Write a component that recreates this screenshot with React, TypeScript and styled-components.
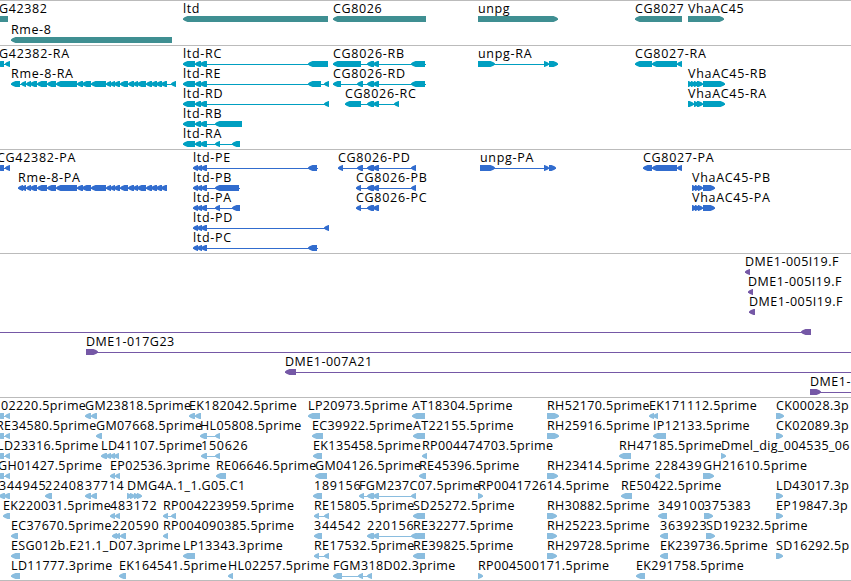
import styled, { createGlobalStyle } from 'styled-components'

type Span = [number, number]

interface Feature {
  label: string
  x: number
  exons: Span[]
  forward?: boolean
  line?: Span
}

interface TrackData {
  name: string
  color: string
  rowHeight: number
  gap: number
  spacing: number
  rows: Feature[][]
}

const VIEW_WIDTH = 851
const BAR_HEIGHT = 6
const TIP = 4.5

const GlobalStyle = createGlobalStyle`
  body {
    margin: 0;
    background: #fff;
  }
`
const Browser = styled.main`
  width: ${VIEW_WIDTH}px;
  height: 581px;
  overflow: hidden;
  border-bottom: 1px solid #bbb;
  box-sizing: border-box;
  background: #fff;
  color: #000;
  font: 12.5px/14px 'Open Sans', sans-serif;
  font-kerning: none;
`
const TrackSection = styled.section<{ $gap: number }>`
  border-top: 1px solid #bbb;
  padding-bottom: ${({ $gap }) => $gap}px;
`
const Row = styled.div<{ $height: number }>`
  position: relative;
  height: ${({ $height }) => $height}px;
`
const Label = styled.span<{ $spacing: number }>`
  position: absolute;
  top: 1px;
  white-space: pre;
  letter-spacing: ${({ $spacing }) => $spacing}px;
`
const Glyphs = styled.svg`
  position: absolute;
  top: 15px;
  left: 0;
  display: block;
`

// reverse strand unless stated otherwise
function rev(label: string, x: number, exons: Span[], line?: Span): Feature {
  return { label, x, exons, line }
}
function fwd(label: string, x: number, exons: Span[], line?: Span): Feature {
  return { label, x, exons, line, forward: true }
}

const ltd: Span[] = [[183, 195], [195, 201], [200, 207]]
const ltdCds: Span[] = [[193, 198], [197, 202], [201, 207]]
const cg8026: Span[] = [[367, 374], [373, 379]]
const edge: Span[] = [[-4, 4], [5, 10]]
const rme: Span[] = [
  [26, 31], [30, 37], [37, 47], [47, 56], [56, 77], [77, 83], [82, 91], [91, 106],
  [106, 111], [110, 115], [114, 120], [120, 128], [128, 134], [133, 138], [137, 146], [146, 152],
  [151, 157], [156, 162], [161, 167],
]

const tracks: TrackData[] = [
  {
    name: 'genes', color: '#3f8f92', rowHeight: 21, gap: 2, spacing: 0.6,
    rows: [
      [
        rev('G42382', -1, [[-10, 8]]),
        rev('ltd', 183, [[183, 328]]),
        rev('CG8026', 333, [[333, 426]]),
        fwd('unpg', 478, [[478, 558]]),
        rev('CG8027', 635, [[635, 682]]),
        fwd('VhaAC45', 688, [[688, 724]]),
      ],
      [rev('Rme-8', 11, [[11, 172]])],
    ],
  },
  {
    name: 'transcripts', color: '#009fc1', rowHeight: 20, gap: 3, spacing: 0.7,
    rows: [
      [
        rev('G42382-RA', -1, edge),
        rev('ltd-RC', 183, [...ltd, [308, 328]]),
        rev('CG8026-RB', 333, [[333, 361], ...cg8026, [411, 425]], [333, 426]),
        fwd('unpg-RA', 478, [[478, 495], [544, 549], [549, 558]]),
        rev('CG8027-RA', 635, [[635, 652], [652, 677], [677, 682]]),
      ],
      [
        rev('Rme-8-RA', 11, [[11, 20], [21, 26], ...rme, [171, 176]]),
        rev('ltd-RE', 183, [...ltd, [308, 321], [324, 329]]),
        rev('CG8026-RD', 333, [[333, 341], [357, 363], ...cg8026, [411, 425]], [333, 426]),
        fwd('VhaAC45-RB', 688, [[688, 693], [691, 696], [694, 699], [697, 703], [703, 725]]),
      ],
      [
        rev('ltd-RD', 183, [...ltd, [324, 329]]),
        rev('CG8026-RC', 345, [[345, 361], ...cg8026, [394, 399]]),
        fwd('VhaAC45-RA', 688, [[688, 694], [694, 699], [697, 703], [703, 725]]),
      ],
      [rev('ltd-RB', 183, [...ltd, [215, 242]])],
      [rev('ltd-RA', 183, [...ltd, [215, 220], [232, 240]])],
    ],
  },
  {
    name: 'polypeptides', color: '#316cce', rowHeight: 20, gap: 3, spacing: 0.7,
    rows: [
      [
        rev('CG42382-PA', -3, edge),
        rev('ltd-PE', 193, [...ltdCds, [308, 317]], [193, 318]),
        rev('CG8026-PD', 338, [[338, 343], [357, 363], ...cg8026, [411, 416]]),
        fwd('unpg-PA', 480, [[480, 495], [544, 549], [549, 556]]),
        rev('CG8027-PA', 643, [[643, 652], [652, 677], [677, 682]]),
      ],
      [
        rev('Rme-8-PA', 18, [[18, 23], [21, 26], ...rme]),
        rev('ltd-PB', 193, [...ltdCds, [215, 239]], [193, 240]),
        rev('CG8026-PB', 356, [[356, 361], ...cg8026, [411, 416]]),
        fwd('VhaAC45-PB', 692, [[692, 697], [695, 700], [698, 703], [703, 715]]),
      ],
      [
        rev('ltd-PA', 193, [...ltdCds, [215, 220], [232, 240]]),
        rev('CG8026-PC', 356, [[356, 361], ...cg8026]),
        fwd('VhaAC45-PA', 692, [[692, 697], [695, 700], [698, 703], [703, 715]]),
      ],
      [rev('ltd-PD', 193, [...ltdCds, [324, 329]])],
      [rev('ltd-PC', 193, [...ltdCds, [308, 317]], [193, 318])],
    ],
  },
  {
    name: 'clones', color: '#7558a6', rowHeight: 20, gap: 3, spacing: 0.5,
    rows: [
      [rev('DME1-005I19.F', 745, [[745, 750]])],
      [rev('DME1-005I19.F', 748, [[748, 753]])],
      [rev('DME1-005I19.F', 749, [[749, 755]])],
      [rev('', 0, [[801, 811]], [0, 811])],
      [fwd('DME1-017G23', 86, [[86, 98]], [86, 851])],
      [rev('DME1-007A21', 285, [[285, 296]], [285, 851])],
      [fwd('DME1-', 810, [[810, 821]], [810, 851])],
    ],
  },
  {
    name: 'ests', color: '#8abddf', rowHeight: 20, gap: 2, spacing: 0.38,
    rows: [
      [
        rev('02220.5prime', 1, edge),
        rev('GM23818.5prime', 85, [[85, 91], [91, 97]]),
        rev('EK182042.5prime', 189, [[189, 195], [195, 201]]),
        rev('LP20973.5prime', 308, [[308, 320]]),
        rev('AT18304.5prime', 412, [[412, 425]]),
        fwd('RH52170.5prime', 547, [[547, 559]]),
        rev('EK171112.5prime', 649, [[649, 654], [653, 658]]),
        fwd('CK00028.3p', 776, [[776, 784]]),
      ],
      [
        rev('RE34580.5prime', -4, edge),
        rev('GM07668.5prime', 96, [[96, 102]]),
        rev('HL05808.5prime', 200, [[200, 207], [215, 220]]),
        rev('EC39922.5prime', 312, [[312, 323]]),
        rev('AT22155.5prime', 413, [[413, 425]]),
        fwd('RH25916.5prime', 547, [[547, 559]]),
        rev('IP12133.5prime', 653, [[653, 666]]),
        fwd('CK02089.3p', 776, [[776, 783]]),
      ],
      [
        rev('LD23316.5prime', -3, edge),
        rev('LD41107.5prime', 101, [[101, 107], [106, 111], [110, 115], [114, 119]]),
        rev('150626', 201, [[201, 207], [215, 220]]),
        rev('EK135458.5prime', 313, [[313, 322]]),
        rev('RP004474703.5prime', 422, [[422, 427]]),
        rev('RH47185.5prime', 619, [[619, 631]]),
        fwd('Dmel_dig_004535_06', 721, [[721, 726]]),
      ],
      [
        rev('GH01427.5prime', -2, edge),
        rev('EP02536.3prime', 110, [[110, 115], [115, 120]]),
        rev('RE06646.5prime', 216, [[216, 226]]),
        rev('GM04126.5prime', 315, [[315, 327]]),
        rev('RE45396.5prime', 419, [[419, 426]]),
        fwd('RH23414.5prime', 547, [[547, 558]]),
        rev('228439', 655, [[655, 660]]),
        fwd('GH21610.5prime', 703, [[703, 714]]),
      ],
      [
        rev('344945', -1, [[-1, 5], [4, 10]]),
        rev('22408', 45, [[45, 52]]),
        rev('37714', 85, [[85, 91], [91, 97]]),
        fwd('DMG4A.1_1.G05.C1', 127, [[127, 132], [130, 135], [134, 139], [137, 142]]),
        rev('189156', 314, [[313, 322]]),
        rev('FGM237C07.5prime', 359, [[359, 364], ...cg8026, [411, 416]]),
        fwd('RP004172614.5prime', 478, [[478, 483]]),
        rev('RE50422.5prime', 621, [[621, 632]]),
        fwd('LD43017.3p', 776, [[776, 783]]),
      ],
      [
        rev('EK220031.5prime', 3, [[3, 10]]),
        rev('483172', 110, [[110, 115], [115, 120]]),
        rev('RP004223959.5prime', 163, [[163, 168], [171, 176]]),
        rev('RE15805.5prime', 314, [[314, 319], [324, 329]]),
        rev('SD25272.5prime', 413, [[413, 425]]),
        fwd('RH30882.5prime', 547, [[547, 557]]),
        rev('349100', 658, [[658, 667]]),
        fwd('375383', 704, [[704, 713]]),
        fwd('EP19847.3p', 776, [[776, 783]]),
      ],
      [
        rev('EC37670.5prime', 11, [[11, 18]]),
        rev('220590', 112, [[112, 117], [115, 120], [120, 126]]),
        rev('RP004090385.5prime', 163, [[163, 168]]),
        rev('344542', 314, [[314, 322]]),
        rev('220156', 367, [...cg8026, [411, 417]]),
        rev('RE32277.5prime', 413, [[413, 425]]),
        fwd('RH25223.5prime', 547, [[547, 557]]),
        rev('363923', 660, [[660, 668]]),
        fwd('SD19232.5prime', 706, [[706, 715]]),
      ],
      [
        rev('ESG012b.E21.1_D07.3prime', 11, [[11, 20]]),
        rev('LP13343.3prime', 183, [[183, 195]]),
        rev('RE17532.5prime', 314, [[314, 319], [324, 329]]),
        rev('RE39825.5prime', 413, [[413, 425]]),
        fwd('RH29728.5prime', 547, [[547, 557]]),
        rev('EK239736.5prime', 660, [[660, 668]]),
        fwd('SD16292.5p', 776, [[776, 783]]),
      ],
      [
        rev('LD11777.3prime', 11, [[11, 20]]),
        rev('EK164541.5prime', 119, [[119, 126]]),
        rev('HL02257.5prime', 228, [[228, 233]]),
        rev('FGM318D02.3prime', 333, [[333, 342], [358, 363], [367, 372]]),
        fwd('RP004500171.5prime', 478, [[478, 483]]),
        rev('EK291758.5prime', 636, [[636, 645]]),
      ],
    ],
  },
]

// the head is slightly convex so that it stays readable at 6px
function exonPoints([start, end]: Span, forward?: boolean): string {
  const nose = forward ? end : start
  const tail = forward ? start : end
  const dir = forward ? -1 : 1
  const neck = nose + dir * Math.min(TIP, end - start)
  const mid = nose + dir * 1.5

  return [
    `${nose},2.4`, `${mid},1.3`, `${neck},0`, `${tail},0`,
    `${tail},6`, `${neck},6`, `${mid},4.7`, `${nose},3.6`,
  ].join(' ')
}

// plain numeric ids are set wider than named features
function labelSpacing(label: string, spacing: number): number {
  return /^\d+$/.test(label) ? 0.75 : spacing
}

function FeatureGlyph({ feature }: Readonly<{ feature: Feature }>) {
  const { exons, forward } = feature
  const [from, to] = feature.line ?? [exons[0][0], exons[exons.length - 1][1]]

  return (
    <g>
      <rect x={from} y={3} width={to - from} height={1} />
      {exons.map(exon => (
        <polygon key={exon[0]} points={exonPoints(exon, forward)} />
      ))}
    </g>
  )
}

function Track({ track }: Readonly<{ track: TrackData }>) {
  return (
    <TrackSection $gap={track.gap}>
      {track.rows.map((row, index) => (
        <Row key={index} $height={track.rowHeight}>
          <Glyphs width={VIEW_WIDTH} height={BAR_HEIGHT} fill={track.color}>
            {row.map(feature => <FeatureGlyph key={feature.x} feature={feature} />)}
          </Glyphs>
          {row.map(feature => (
            <Label
              key={feature.x}
              $spacing={labelSpacing(feature.label, track.spacing)}
              style={{ left: feature.x }}
            >
              {feature.label}
            </Label>
          ))}
        </Row>
      ))}
    </TrackSection>
  )
}

export default function App() {
  return (
    <Browser>
      <GlobalStyle />
      {tracks.map(track => <Track key={track.name} track={track} />)}
    </Browser>
  )
}
